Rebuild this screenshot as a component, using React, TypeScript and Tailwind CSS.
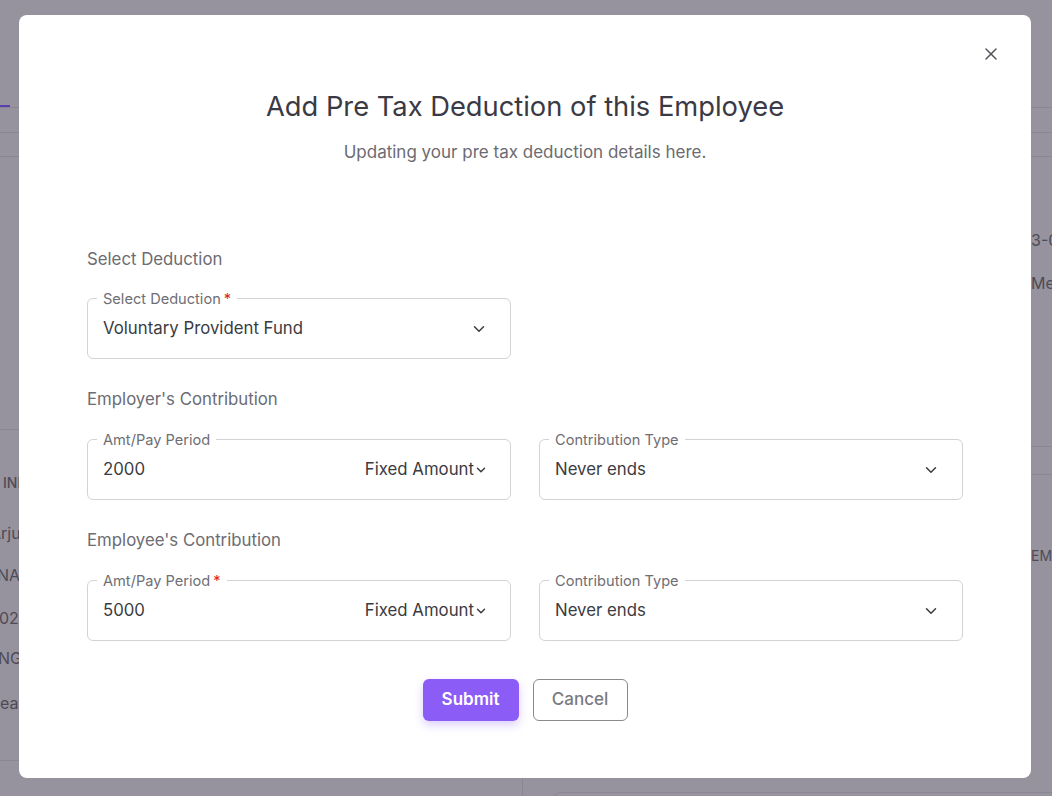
import { ChevronDown, X } from "lucide-react";

type FieldProps = {
  label: string;
  value: string;
  required?: boolean;
  suffix?: string;
};

function OutlinedField({ label, value, required, suffix }: FieldProps) {
  return (
    <div className="relative flex h-[61px] items-center rounded-[6px] border border-[#d3d3d7] pl-[15px] pr-[22px]">
      {/* Floating label on the border */}
      <span className="absolute left-[9px] top-[-10px] bg-white px-[6px] text-[14.6px] leading-5 text-[#6e6e74]">
        {label}
        {required && <span className="ml-[3px] text-[#e02424]">*</span>}
      </span>
      <span className="flex-1 text-[16.8px] text-[#3b3b42]">{value}</span>
      {suffix ? (
        <span className="flex items-center text-[16.8px] text-[#3b3b42]">
          {suffix}
          <ChevronDown size={14} strokeWidth={2.5} className="mt-[1px] text-[#3b3b42]" />
        </span>
      ) : (
        <ChevronDown size={18} strokeWidth={2} className="text-[#3b3b42]" />
      )}
    </div>
  );
}

function SectionLabel({ children }: { children: string }) {
  return <div className="text-[16.8px] leading-6 text-[#6c6c73]">{children}</div>;
}

function BackgroundPage() {
  return (
    <div className="flex h-full w-full flex-col whitespace-nowrap text-[16px] text-[#4e4b56]">
      {/* tabs */}
      <div className="h-[108px] shrink-0 border-b border-[#8a8792]">
        <div className="mt-[105px] h-[2px] w-[10px] bg-[#5b3fb0]" />
      </div>
      <div className="h-[25px] shrink-0 border-b border-[#8a8792]" />
      <div className="h-[24px] shrink-0 border-b border-[#8a8792]" />
      <div className="grid min-h-0 flex-1 grid-cols-[523px_1fr] overflow-hidden">
        <div className="flex flex-col border-r border-[#8a8792]">
          <div className="h-[273px] shrink-0 border-b border-[#8a8792]" />
          <div className="flex flex-col">
            <div className="mt-[43px] pl-[3px] text-[14px] font-medium leading-5">INFORMATION</div>
            <div className="mt-[28px] -ml-[10px] leading-6">Arjun Sharma</div>
            <div className="mt-[18px] -ml-[3px] leading-6">NAL</div>
            <div className="mt-[19px] -ml-[1px] leading-6">02/10/2023</div>
            <div className="mt-[16px] -ml-[2px] leading-6">NG</div>
            <div className="mt-[21px] -ml-[9px] leading-6">Leave</div>
          </div>
          <div className="mt-[45px] border-b border-[#8a8792]" />
        </div>
        <div className="flex flex-col pl-[30px]">
          <div className="h-[290px] shrink-0 border-b border-[#8a8792] pl-[478px]">
            <div className="mt-[71px] leading-6">3-03-2024</div>
            <div className="mt-[19px] leading-6">Mehta</div>
          </div>
          <div className="h-[28px] shrink-0 border-b border-[#8a8792]" />
          <div className="h-[317px] shrink-0 pl-[478px]">
            <div className="mt-[71px] text-[14px] leading-5">EMPLOYEE</div>
          </div>
          <div className="h-[30px] shrink-0 rounded-tl-[8px] border-l border-t border-[#8a8792]" />
        </div>
      </div>
    </div>
  );
}

export default function App() {
  return (
    <div className="relative h-[796px] w-[1052px] overflow-hidden bg-[#96939e] font-['Inter','Noto_Sans',sans-serif]">
      <BackgroundPage />

      {/* Modal overlay */}
      <div className="absolute inset-0 pl-[19px] pt-[15px]">
        <div className="relative flex w-[1012px] flex-col rounded-[8px] bg-white px-[68px] pb-[57px] pt-[76px]">
          <button className="absolute right-[30px] top-[29px] flex h-[20px] w-[20px] items-center justify-center text-[#55555c]">
            <X size={24} strokeWidth={1.75} />
          </button>

          <h2 className="text-center text-[27.3px] leading-8 text-[#3a3a44]">
            Add Pre Tax Deduction of this Employee
          </h2>
          <p className="mt-[17px] text-center text-[17px] leading-6 text-[#6b6b72]">
            Updating your pre tax deduction details here.
          </p>

          <div className="mt-[83px]">
            <SectionLabel>Select Deduction</SectionLabel>
          </div>
          <div className="mt-[27px] grid grid-cols-2 gap-[28px]">
            <OutlinedField label="Select Deduction" value="Voluntary Provident Fund" required />
          </div>

          <div className="mt-[28px]">
            <SectionLabel>Employer's Contribution</SectionLabel>
          </div>
          <div className="mt-[28px] grid grid-cols-2 gap-[28px]">
            <OutlinedField label="Amt/Pay Period" value="2000" suffix="Fixed Amount" />
            <OutlinedField label="Contribution Type" value="Never ends" />
          </div>

          <div className="mt-[28px]">
            <SectionLabel>Employee's Contribution</SectionLabel>
          </div>
          <div className="mt-[28px] grid grid-cols-2 gap-[28px]">
            <OutlinedField label="Amt/Pay Period" value="5000" suffix="Fixed Amount" required />
            <OutlinedField label="Contribution Type" value="Never ends" />
          </div>

          <div className="mt-[38px] flex justify-center gap-[14px]">
            <button className="h-[42px] w-[96px] rounded-[6px] bg-[#8b5cf6] text-[17px] font-semibold text-white shadow-[0_4px_10px_rgba(139,92,246,0.3)]">
              Submit
            </button>
            <button className="h-[42px] w-[95px] rounded-[6px] border border-[#8a8a8e] bg-white text-[17px] font-medium text-[#7a7a80]">
              Cancel
            </button>
          </div>
        </div>
      </div>
    </div>
  );
}
